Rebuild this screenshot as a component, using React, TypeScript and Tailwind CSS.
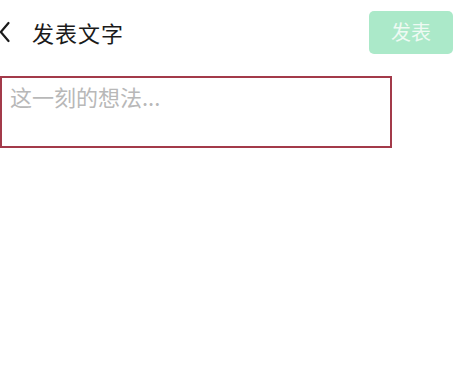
export default function App() {
  return (
    <div className="w-[453px] h-[369px] bg-white overflow-hidden font-['Noto_Sans_CJK_SC','Noto_Sans',sans-serif]">
      {/* Header */}
      <div className="flex items-center h-[64px]">
        <button className="w-[12px] h-[24px] flex items-center shrink-0">
          <svg width="12" height="22" viewBox="0 0 12 22" fill="none">
            <path d="M8.5 2 L0.8 11 L8.5 20" stroke="#1a1a1a" strokeWidth="2.2" strokeLinecap="round" strokeLinejoin="round" />
          </svg>
        </button>
        <h1 className="ml-[20px] text-[22px] leading-none text-[#1a1a1a] tracking-[1px]">发表文字</h1>
        <button className="ml-auto h-[43px] w-[84px] rounded-[5px] bg-[#abe9c9] text-[#eefaf3] text-[20px] leading-none flex items-center justify-center">
          发表
        </button>
      </div>

      {/* Editor */}
      <div className="mt-[12px] w-[392px] h-[72px] border-2 border-[#a33a4a] pl-[8px] pt-[5px]">
        <textarea
          className="w-full h-full resize-none outline-none bg-transparent text-[22px] leading-[26px] text-[#333] placeholder:text-[#b8b8b8] font-['Noto_Sans_CJK_SC','Noto_Sans',sans-serif]"
          placeholder="这一刻的想法..."
        />
      </div>
    </div>
  )
}
